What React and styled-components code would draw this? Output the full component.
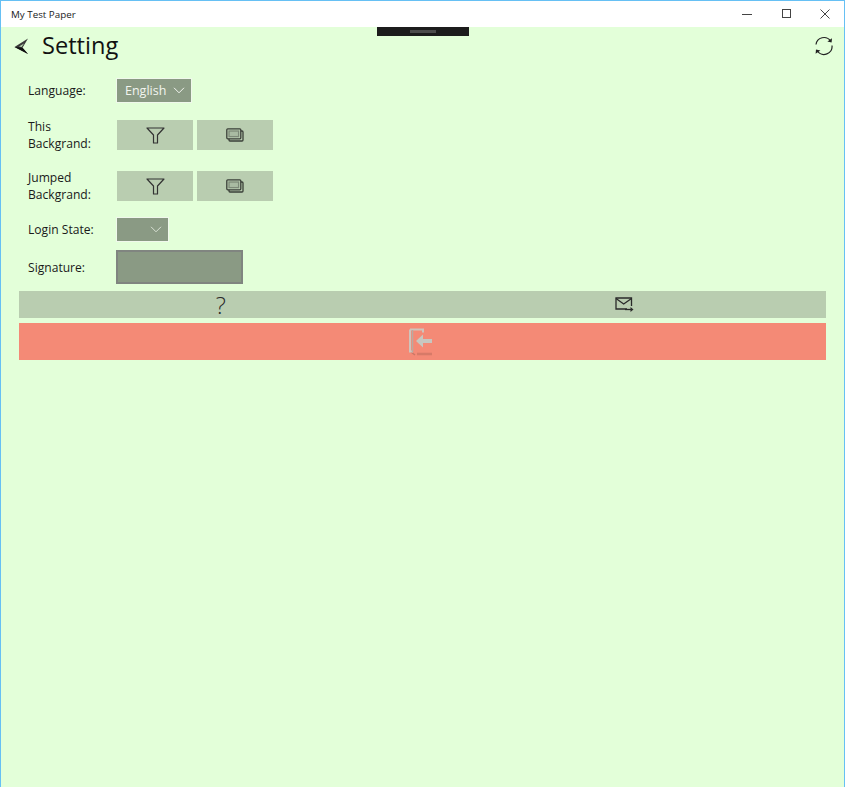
import React from "react";
import styled, { createGlobalStyle } from "styled-components";

const Global = createGlobalStyle`
  html, body { margin: 0; padding: 0; }
  body { font-family: "Open Sans", "Noto Sans", "Liberation Sans", sans-serif; }
`;

const Win = styled.div`
  box-sizing: border-box;
  position: relative;
  width: 845px;
  height: 787px;
  display: flex;
  flex-direction: column;
  background: #e3ffd9;
  border: 1px solid #66c0f4;
  border-bottom: 0;
`;
const TitleBar = styled.div`
  height: 26px;
  flex: none;
  background: #fff;
  display: flex;
  align-items: center;
  justify-content: space-between;
  padding-left: 10px;
  font-size: 9.8px;
  color: #222;
`;
const WinButtons = styled.div`
  display: flex;
  align-items: center;
`;
const WinBtn = styled.div`
  width: 39px;
  height: 26px;
  display: flex;
  align-items: center;
  justify-content: center;
`;
const Handle = styled.div`
  position: absolute;
  left: 376px;
  top: 26px;
  width: 92px;
  height: 9px;
  background: #1c1c1c;
  display: flex;
  align-items: center;
  justify-content: center;
`;
const Grip = styled.div`
  width: 26px;
  height: 3px;
  background: #4c4c4c;
`;
const Header = styled.div`
  height: 38px;
  flex: none;
  display: flex;
  align-items: center;
  padding-left: 12px;
  padding-right: 10px;
`;
const Title = styled.h1`
  margin: 0 0 2px 13px;
  font-size: 23.6px;
  font-weight: 400;
  color: #111;
  flex: 1;
  line-height: 36px;
`;
const Form = styled.div`
  padding: 14px 18px 0 18px;
  display: flex;
  flex-direction: column;
`;
const Row = styled.div`
  display: flex;
  align-items: center;
  padding-left: 9px;
  margin-bottom: ${p => p.$mb}px;
`;
const Label = styled.div`
  width: 89px;
  flex: none;
  font-size: 12.1px;
  line-height: 17px;
  color: #1a1a1a;
`;
const Select = styled.div`
  box-sizing: border-box;
  width: ${p => p.$w}px;
  height: 23px;
  background: #8a9a84;
  outline: 1px solid #f0f8ec;
  display: flex;
  align-items: center;
  justify-content: space-between;
  padding: 0 6px 0 8px;
  color: #f2f5ef;
  font-size: 12.5px;
`;
const Buttons = styled.div`
  display: flex;
  gap: 4px;
`;
const IconBtn = styled.div`
  width: 76px;
  height: 30px;
  background: #b9cdb0;
  display: flex;
  align-items: center;
  justify-content: center;
`;
const Signature = styled.div`
  box-sizing: border-box;
  width: 127px;
  height: 34px;
  margin-left: -1px;
  background: #8a9a84;
  border: 2px solid #808580;
`;
const WideBar = styled.div`
  height: 27px;
  background: #b9cdb0;
  display: grid;
  grid-template-columns: 1fr 1fr;
  margin-bottom: 5px;
`;
const WideCell = styled.div`
  display: flex;
  align-items: center;
  justify-content: center;
  font-size: 24px;
  font-weight: 300;
  line-height: 27px;
  color: #2a2a2a;
`;
const Danger = styled.div`
  height: 37px;
  background: #f48a76;
  display: flex;
  align-items: center;
  justify-content: center;
  padding-right: 4px;
`;

const Chevron = ({ color = "#f2f5ef" }) => (
  <svg width="12" height="7" viewBox="0 0 12 7" fill="none" stroke={color} strokeWidth="1">
    <path d="M1 .8 6 5.8 11 .8" />
  </svg>
);
const Funnel = () => (
  <svg width="19" height="17" viewBox="0 0 19 17" fill="none" stroke="#333" strokeWidth="1.2">
    <path d="M1 1h17l-6.5 7v8h-4V8z" strokeLinejoin="round" />
  </svg>
);
const Stack = () => (
  <svg width="18" height="14" viewBox="0 0 18 14" fill="none" stroke="#3a3f38" strokeWidth="1.3">
    <rect x="3" y="3" width="14" height="10" rx="1" />
    <rect x=".8" y=".8" width="14" height="10" rx="1" fill="#b9cdb0" />
    <rect x="3" y="3" width="9.6" height="5.6" stroke="#7d8a78" fill="#a9bba2" />
  </svg>
);

export default function App() {
  return (
    <Win>
      <Global />
      <TitleBar>
        My Test Paper
        <WinButtons>
          <WinBtn>
            <svg width="10" height="10" viewBox="0 0 10 10"><path d="M0 5.5h10" stroke="#444" strokeWidth="1" /></svg>
          </WinBtn>
          <WinBtn>
            <svg width="10" height="10" viewBox="0 0 10 10"><rect x="1.5" y=".5" width="8" height="8" fill="none" stroke="#444" /></svg>
          </WinBtn>
          <WinBtn>
            <svg width="10" height="10" viewBox="0 0 10 10"><path d="M.5.5l9 9M9.5.5l-9 9" stroke="#444" /></svg>
          </WinBtn>
        </WinButtons>
      </TitleBar>
      <Handle><Grip /></Handle>
      <Header>
        <svg width="16" height="17" viewBox="0 0 16 17">
          <path d="M15 .5 1.5 9 15 16 9.5 9.8z" fill="#3a3a3a" />
          <path d="M1.5 9 15 16 9.5 9.8z" fill="#0f0f0f" />
          <path d="M11 5.5 6 8.6 8.6 8.9z" fill="#b9d8b0" />
        </svg>
        <Title>Setting</Title>
        <svg width="20" height="20" viewBox="0 0 20 20" fill="none" stroke="#222" strokeWidth="1.2">
          <path d="M2 8.5A8 8 0 0 1 16.5 5" />
          <path d="M18 9.5a8 8 0 0 1-14.5 5.5" />
          <path d="M18 2.2 17.6 6.6 13.4 5.6z" fill="#222" stroke="none" />
          <path d="M1.6 17.8 2 13.4 6.4 14.4z" fill="#222" stroke="none" />
        </svg>
      </Header>
      <Form>
        <Row $mb={16}>
          <Label>Language:</Label>
          <Select $w={74}>English <Chevron /></Select>
        </Row>
        <Row $mb={17}>
          <Label>This<br />Backgrand:</Label>
          <Buttons>
            <IconBtn><Funnel /></IconBtn>
            <IconBtn><Stack /></IconBtn>
          </Buttons>
        </Row>
        <Row $mb={15}>
          <Label>Jumped<br />Backgrand:</Label>
          <Buttons>
            <IconBtn><Funnel /></IconBtn>
            <IconBtn><Stack /></IconBtn>
          </Buttons>
        </Row>
        <Row $mb={9}>
          <Label>Login State:</Label>
          <Select $w={51}><span /><Chevron color="#d8e0d4" /></Select>
        </Row>
        <Row $mb={7}>
          <Label>Signature:</Label>
          <Signature />
        </Row>
        <WideBar>
          <WideCell>?</WideCell>
          <WideCell>
            <svg width="19" height="15" viewBox="0 0 19 15" fill="none" stroke="#2a2a2a" strokeWidth="1.3">
              <path d="M12 12H1V1h15.5v8" />
              <path d="M1 1.5l7.7 5.5L16.5 1.5" />
              <path d="M10 12.5h7" />
              <path d="M15.5 10l3 2.5-3 2.5z" fill="#2a2a2a" stroke="none" />
            </svg>
          </WideCell>
        </WideBar>
        <Danger>
          <svg width="26" height="28" viewBox="0 0 26 28" fill="none">
            <path d="M3 24l4 3" stroke="#b8705f" strokeWidth="1.5" opacity=".7" />
            <path d="M9 26h15" stroke="#cf7565" strokeWidth="2.5" opacity=".8" />
            <path d="M2 1.5h13v3M2 1.5v22h3" stroke="#cfc4bc" strokeWidth="2" />
            <path d="M4.5 2v22" stroke="#b9a9a0" strokeWidth="1.5" />
            <path d="M24 13H14" stroke="#c7c7c0" strokeWidth="4" />
            <path d="M15 6.5 8 13l7 6.5z" fill="#c7c7c0" />
          </svg>
        </Danger>
      </Form>
    </Win>
  );
}
